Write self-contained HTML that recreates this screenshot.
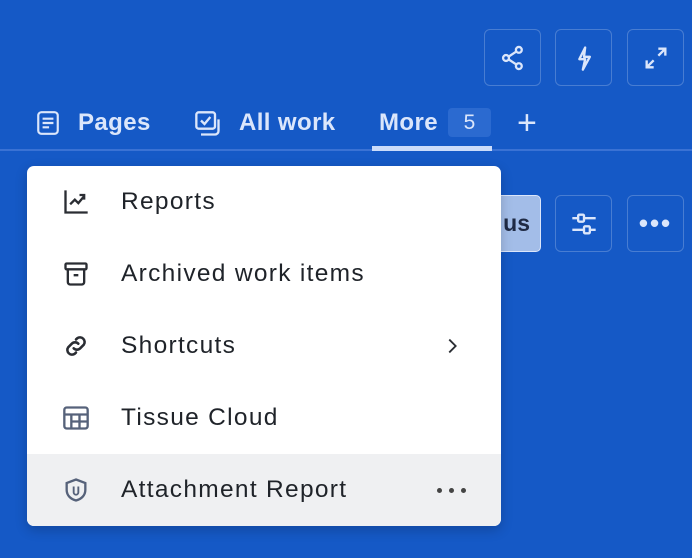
<!DOCTYPE html>
<html><head><style>
*{margin:0;padding:0;box-sizing:border-box}
body{width:692px;height:558px;background:#1559c6;font-family:"Liberation Sans",sans-serif;position:relative;overflow:hidden}
.btn{position:absolute;width:57px;height:57px;border:1px solid rgba(255,255,255,.22);border-radius:6px;display:flex;align-items:center;justify-content:center}
.tab{position:absolute;top:108px;color:#dbe6fb;font-size:24px;font-weight:bold;line-height:30px;letter-spacing:0.4px}
.menu{position:absolute;left:27px;top:166px;width:474px;height:360px;background:#fff;border-radius:7px;overflow:hidden;box-shadow:0 4px 12px rgba(0,0,0,.2)}
.item{position:absolute;left:0;width:474px;height:72px;display:flex;align-items:center;font-size:24.5px;letter-spacing:1.3px;color:#1f2329}
.item svg{position:absolute;left:35px}
.item span{position:absolute;left:94px}
.dot{position:absolute;width:5px;height:5px;border-radius:50%;background:#444;top:34px}
</style></head><body>
<div class="btn" style="left:484px;top:29px"><svg width="28" height="28" viewBox="0 0 24 24" fill="none" stroke="#dbe6fb" stroke-width="2"><circle cx="17" cy="5" r="2.5"/><circle cx="6" cy="12" r="2.5"/><circle cx="17" cy="19" r="2.5"/><path d="M8.2 10.8l6.6-4.3M8.2 13.2l6.6 4.3"/></svg></div>
<div class="btn" style="left:555px;top:29px"><svg width="28" height="28" viewBox="0 0 24 24" fill="none" stroke="#dbe6fb" stroke-width="2" stroke-linejoin="round"><path d="M13 3L8 13h5l-2 9 6-11h-5z"/></svg></div>
<div class="btn" style="left:627px;top:29px"><svg width="28" height="28" viewBox="0 0 24 24" fill="none" stroke="#dbe6fb" stroke-width="2"><path d="M14 4h6v6M20 4l-6 6M10 20H4v-6M4 20l6-6"/></svg></div>

<svg style="position:absolute;left:35px;top:110px" width="26" height="26" viewBox="0 0 24 24" fill="none" stroke="#dbe6fb" stroke-width="2"><rect x="3" y="2" width="18" height="20" rx="3"/><path d="M7 8h10M7 12h10M7 16h6"/></svg>
<div class="tab" style="left:78px">Pages</div>
<svg style="position:absolute;left:194px;top:110px" width="28" height="28" viewBox="0 0 24 24" fill="none" stroke="#dbe6fb" stroke-width="2"><rect x="2" y="2" width="16" height="14" rx="2"/><path d="M6 9l3 3 5-6M21 8v10a3 3 0 0 1-3 3H6"/></svg>
<div class="tab" style="left:239px">All work</div>
<div class="tab" style="left:379px">More</div>
<div style="position:absolute;left:448px;top:108px;width:43px;height:29px;background:#2b6ad0;border-radius:4px;color:#dbe6fb;font-size:21px;text-align:center;line-height:29px">5</div>
<div style="position:absolute;left:517px;top:111px;color:#dbe6fb;font-size:34px;line-height:24px">+</div>
<div style="position:absolute;left:0;top:149px;width:692px;height:2px;background:#3a72d4"></div>
<div style="position:absolute;left:372px;top:146px;width:120px;height:5px;background:#cbdcfa"></div>

<div style="position:absolute;left:440px;top:195px;width:101px;height:57px;background:#a3bde8;border:1px solid #dbe6fb;border-radius:5px;font-size:23px;font-weight:bold;color:#1f2a44;line-height:55px;text-align:right;padding-right:10px">us</div>
<div class="btn" style="left:555px;top:195px"><svg width="28" height="28" viewBox="0 0 24 24" fill="none" stroke="#dbe6fb" stroke-width="2"><path d="M2 7h5M12 7h10M2 17h10M17 17h5"/><rect x="7" y="4" width="5" height="6" rx="1"/><rect x="12" y="14" width="5" height="6" rx="1"/></svg></div>
<div class="btn" style="left:627px;top:195px;color:#dbe6fb;font-size:26px;font-weight:bold;letter-spacing:2px">•••</div>

<div class="menu">
 <div class="item" style="top:0"><svg width="28" height="28" viewBox="0 0 24 24" fill="none" stroke="#2a2d33" stroke-width="2"><path d="M3 2v19h19M7 14l4-4 3 3 5-6M15 6h4v4"/></svg><span>Reports</span></div>
 <div class="item" style="top:72px"><svg width="28" height="28" viewBox="0 0 24 24" fill="none" stroke="#2a2d33" stroke-width="2"><rect x="3" y="3" width="18" height="5" rx="1"/><path d="M5 8v11a2 2 0 0 0 2 2h10a2 2 0 0 0 2-2V8M10 13h4"/></svg><span>Archived work items</span></div>
 <div class="item" style="top:144px"><svg width="28" height="28" viewBox="0 0 24 24" fill="none" stroke="#2a2d33" stroke-width="2.2" stroke-linecap="round"><path d="M10 14a4 4 0 0 0 5.6 0l3-3a4 4 0 0 0-5.6-5.6l-1 1M14 10a4 4 0 0 0-5.6 0l-3 3a4 4 0 0 0 5.6 5.6l1-1"/></svg><span>Shortcuts</span><svg style="left:414px" width="22" height="22" viewBox="0 0 24 24" fill="none" stroke="#2a2d33" stroke-width="2"><path d="M9 5l7 7-7 7"/></svg></div>
 <div class="item" style="top:216px"><svg width="28" height="28" viewBox="0 0 24 24" fill="none" stroke="#56627a" stroke-width="2"><rect x="2" y="3" width="20" height="18" rx="2"/><path d="M2 9h20M8 9v12M15 9v12M8 15h14"/></svg><span>Tissue Cloud</span></div>
 <div class="item" style="top:288px;background:#eff0f2"><svg width="28" height="28" viewBox="0 0 24 24" fill="none" stroke="#56627a" stroke-width="2"><path d="M12 3l8 3v6c0 5-4 8-8 9-4-1-8-4-8-9V6z"/><path d="M10 9v5a2 2 0 0 0 4 0V9" stroke-width="1.6"/></svg><span>Attachment Report</span><div class="dot" style="left:410px"></div><div class="dot" style="left:422px"></div><div class="dot" style="left:434px"></div></div>
</div>
</body></html>
